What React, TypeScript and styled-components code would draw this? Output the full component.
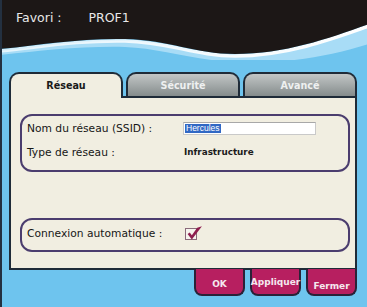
import styled, { createGlobalStyle } from 'styled-components';

const GlobalStyle = createGlobalStyle`
  html, body {
    margin: 0;
    padding: 0;
    background: #6ec4ee;
  }
  * {
    box-sizing: border-box;
  }
`;

const Frame = styled.div`
  width: 367px;
  height: 307px;
  background: #6ec4ee;
  border-left: 2px solid #233040;
  font-family: 'DejaVu Sans', Verdana, sans-serif;
  overflow: hidden;
`;

const Header = styled.header`
  position: relative;
  height: 60px;
  margin-left: -2px;
`;

const Wave = styled.svg`
  position: absolute;
  inset: 0;
`;

const Title = styled.div`
  position: relative;
  display: flex;
  gap: 27px;
  padding: 10px 0 0 16px;
  color: #e8e8e8;
  font-size: 12.5px;
  line-height: 15px;
`;

const Tabs = styled.nav`
  display: flex;
  gap: 3px;
  margin-top: 12px;
  padding-left: 7px;
  position: relative;
  z-index: 1;
`;

const Tab = styled.div<{ $active?: boolean }>`
  width: 114px;
  height: ${p => (p.$active ? '26px' : '24px')};
  margin-bottom: ${p => (p.$active ? '-2px' : '0')};
  border: 2px solid #1f2b38;
  border-bottom: none;
  border-radius: 10px 10px 0 0;
  background: ${p =>
    p.$active ? '#f1eee1' : 'linear-gradient(#c2c6c6, #858c8c)'};
  color: ${p => (p.$active ? '#1a1a1a' : '#eef0f0')};
  font-size: 9.6px;
  font-weight: bold;
  display: flex;
  justify-content: center;
  padding-top: 6px;
`;

const Panel = styled.section`
  width: 348px;
  height: 174px;
  margin-left: 7px;
  border: 2px solid #1f2b38;
  background: #f1eee1;
  padding: 16px 5px 0 9px;
  display: flex;
  flex-direction: column;
  gap: 46px;
`;

const Group = styled.div<{ $h: number; $top?: boolean }>`
  height: ${p => p.$h}px;
  border: 2px solid #4b3d6e;
  border-radius: 12px;
  padding: ${p => (p.$top ? '6px 5px 0' : '0 5px 3px')};
  display: grid;
  grid-template-columns: 157px 1fr;
  align-content: ${p => (p.$top ? 'start' : 'center')};
  align-items: center;
  row-gap: 11px;
`;

const Label = styled.div`
  font-size: 10.7px;
  color: #161616;
  line-height: 13px;
  white-space: nowrap;
`;

const Value = styled.div`
  font-size: 8.8px;
  font-weight: bold;
  color: #1c1c1c;
  line-height: 13px;
`;

const Input = styled.div`
  width: 133px;
  height: 13px;
  margin-left: -1px;
  background: #fff;
  border: 1px solid #c9c9c9;
  border-top-color: #a8a8a8;
  padding: 1px 1px;
  display: flex;
`;

const Selected = styled.span`
  background: #3168c4;
  color: #fff;
  font-family: 'Liberation Sans', Arial, sans-serif;
  font-size: 8.5px;
  line-height: 9px;
  padding: 0 1px;
`;

const Check = styled.div`
  position: relative;
  width: 12px;
  height: 12px;
  margin-left: 1px;
  border: 1px solid #8a6a7a;
  background: #f6f3ee;
`;

const Tick = styled.svg`
  position: absolute;
  left: 0;
  top: -5px;
`;

const Buttons = styled.div`
  display: flex;
  justify-content: flex-end;
  gap: 5px;
  width: 355px;
`;

const Button = styled.button<{ $pad: number }>`
  width: 51px;
  height: 27px;
  margin-top: -1px;
  border: 2px solid #2a2238;
  border-top: none;
  border-radius: 0 0 8px 8px;
  background: #b71f60;
  color: #f4e8ee;
  font-family: 'DejaVu Sans', Verdana, sans-serif;
  font-size: 9px;
  font-weight: bold;
  padding: ${p => p.$pad}px 0 0;
  display: flex;
  justify-content: center;
  align-items: flex-start;
  white-space: nowrap;
`;

export default function App() {
  return (
    <>
      <GlobalStyle />
      <Frame>
        <Header>
          <Wave width="369" height="60" viewBox="0 0 369 60">
            <defs>
              <linearGradient id="hl" x1="0" x2="1" y1="0" y2="0">
                <stop offset="0" stopColor="#ffffff" stopOpacity="0.7" />
                <stop offset="0.6" stopColor="#ffffff" stopOpacity="0.9" />
                <stop offset="1" stopColor="#ffffff" stopOpacity="1" />
              </linearGradient>
            </defs>
            <path
              d="M0,51 C40,47 80,40 125,41 C170,42 195,56 235,56 C285,56 330,40 369,26 L369,44 C330,56 290,64 235,62 C190,60 160,48 125,47 C80,46 40,51 0,55 Z"
              fill="#a8dcf6"
            />
            <path
              d="M0,51 C40,47 80,40 125,41 C170,42 195,56 235,56 C285,56 330,40 369,26"
              fill="none"
              stroke="url(#hl)"
              strokeWidth="3.5"
            />
            <path
              d="M0,0 H369 V24 C330,38 285,54 235,54 C195,54 170,40 125,39 C80,38 40,45 0,49 Z"
              fill="#1c1716"
            />
          </Wave>
          <Title>
            <span>Favori :</span>
            <span>PROF1</span>
          </Title>
        </Header>
        <Tabs>
          <Tab $active>Réseau</Tab>
          <Tab>Sécurité</Tab>
          <Tab>Avancé</Tab>
        </Tabs>
        <Panel>
          <Group $h={58} $top>
            <Label>Nom du réseau (SSID) :</Label>
            <Input>
              <Selected>Hercules</Selected>
            </Input>
            <Label>Type de réseau :</Label>
            <Value>Infrastructure</Value>
          </Group>
          <Group $h={34}>
            <Label>Connexion automatique :</Label>
            <Check>
              <Tick width="17" height="17" viewBox="0 0 16 16">
                <path
                  d="M1.5,9.5 L5.5,14.5 L15,2 L10.5,3.5 L5.5,10.5 L3.5,8 Z"
                  fill="#8e1e4e"
                />
              </Tick>
            </Check>
          </Group>
        </Panel>
        <Buttons>
          <Button $pad={10}>OK</Button>
          <Button $pad={8}>Appliquer</Button>
          <Button $pad={12}>Fermer</Button>
        </Buttons>
      </Frame>
    </>
  );
}
